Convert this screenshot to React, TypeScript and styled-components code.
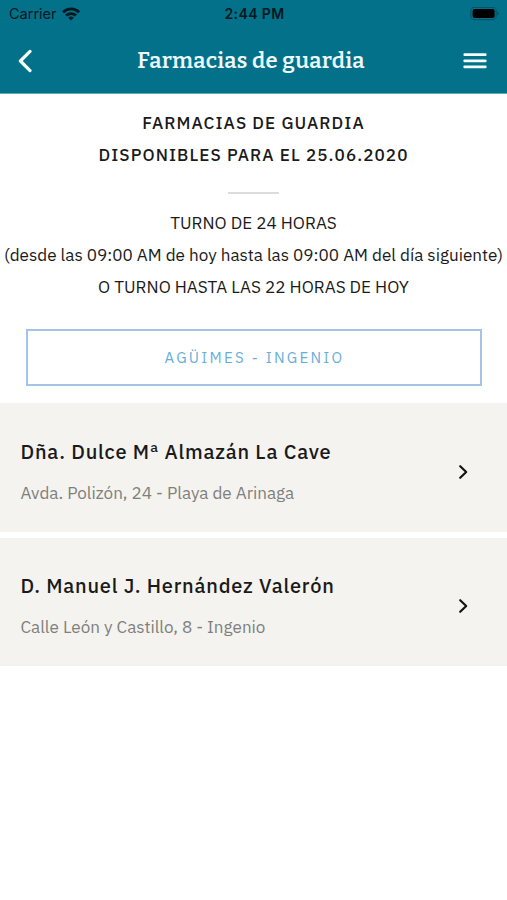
import React from "react";
import styled, { createGlobalStyle } from "styled-components";

const GlobalStyle = createGlobalStyle`
  * { box-sizing: border-box; }
  body {
    margin: 0;
    background: #fff;
    color: #1a1a1a;
    font-family: "IBM Plex Sans", "Noto Sans", sans-serif;
  }
`;

const Screen = styled.div`
  width: 100%;
  min-height: 900px;
  background: #fff;
  overflow: hidden;
`;

const Header = styled.header`
  height: 94px;
  background: #03718a;
  border-bottom: 1px solid #5fa9ba;
`;

const StatusBar = styled.div`
  display: grid;
  grid-template-columns: 1fr auto 1fr;
  align-items: center;
  height: 27px;
  padding: 0 7px 0 9px;
  color: #03181f;
  font-family: Inter, sans-serif;
  line-height: 27px;
`;

const Carrier = styled.div`
  display: flex;
  align-items: center;
  gap: 5px;
  font-size: 14.5px;
`;

const Clock = styled.div`
  font-size: 14px;
  font-weight: 600;
  letter-spacing: 0.4px;
`;

const BatterySlot = styled.div`
  display: flex;
  justify-content: flex-end;
`;

const NavBar = styled.div`
  display: grid;
  grid-template-columns: 57px 1fr 62px;
  align-items: center;
  height: 66px;
`;

const NavButton = styled.button<{ $align: "flex-start" | "flex-end" }>`
  display: flex;
  justify-content: ${(p) => p.$align};
  padding: 0 20px 0 16.5px;
  border: 0;
  background: none;
  color: #f4fcfe;
`;

const Title = styled.h1`
  margin: 0;
  padding-top: 1px;
  color: #eefafd;
  font: 600 22px/66px "Roboto Slab", Bitter, "DejaVu Serif", serif;
  letter-spacing: 0.3px;
  text-align: center;
  white-space: nowrap;
`;

const Intro = styled.section`
  display: flex;
  flex-direction: column;
  align-items: center;
  padding-top: 13px;
`;

const IntroLine = styled.p<{ $strong?: boolean }>`
  margin: 0;
  font-size: 17.1px;
  font-weight: ${(p) => (p.$strong ? 500 : 400)};
  letter-spacing: ${(p) => (p.$strong ? "1.07px" : "0")};
  line-height: 32px;
  white-space: nowrap;
`;

const Divider = styled.hr`
  width: 51px;
  height: 2px;
  margin: 21px 0 13px;
  border: 0;
  background: #dcdcdc;
`;

const ZoneButton = styled.button`
  display: block;
  width: 456px;
  height: 57px;
  margin: 26px 0 17px 26px;
  padding: 0 0 0 1px;
  border: 2px solid #a3c4e6;
  background: #fff;
  color: #67aedb;
  font-family: inherit;
  font-size: 15px;
  letter-spacing: 2.25px;
`;

const List = styled.ul`
  display: flex;
  flex-direction: column;
  gap: 6px;
  margin: 0;
  padding: 0;
  list-style: none;
`;

const Card = styled.li`
  display: flex;
  align-items: center;
  justify-content: space-between;
  height: 128px;
  padding: 8px 38px 0 20.5px;
  background: #f4f3ef;

  &:first-child {
    height: 129px;
  }
`;

const PharmacyName = styled.h2`
  margin: 0;
  font-size: 20px;
  font-weight: 500;
  letter-spacing: 0.78px;
  line-height: 30px;
`;

const Address = styled.p`
  margin: 12px 0 0;
  color: #7f7f7d;
  font-size: 17.1px;
  line-height: 28px;
`;

const WifiIcon = () => (
  <svg width="18" height="14" viewBox="0 0 18 14" fill="none" stroke="#03181f" strokeWidth="2.8">
    <path d="M1 5.2a11.4 11.4 0 0 1 16 0" />
    <path d="M4 8.6a7.1 7.1 0 0 1 10 0" />
    <path d="M9 13.4 6.2 10.8a4 4 0 0 1 5.6 0Z" fill="#03181f" stroke="none" />
  </svg>
);

const BatteryIcon = () => (
  <svg width="30" height="14" viewBox="0 0 30 14">
    <rect x="0.8" y="0.3" width="25.4" height="12.4" rx="3.6" fill="none" stroke="#03566a" strokeWidth="1.2" />
    <rect x="2.6" y="1.9" width="22" height="9.2" rx="2" fill="#000" />
    <path d="M27.4 4.5v4q1.6-.6 1.6-2t-1.6-2Z" fill="#03566a" />
  </svg>
);

const BackIcon = () => (
  <svg width="15" height="24" viewBox="0 0 15 24" fill="none" stroke="currentColor" strokeWidth="3.2">
    <path d="M13 2.4 3.4 12 13 21.6" strokeLinecap="round" strokeLinejoin="round" />
  </svg>
);

const MenuIcon = () => (
  <svg width="24" height="18" viewBox="0 0 24 18" fill="currentColor">
    <rect x="0.5" y="1.3" width="23" height="2.8" rx="0.8" />
    <rect x="0.5" y="7.4" width="23" height="2.8" rx="0.8" />
    <rect x="0.5" y="13.5" width="23" height="2.8" rx="0.8" />
  </svg>
);

const ChevronIcon = () => (
  <svg width="11" height="16" viewBox="0 0 11 16" fill="none" stroke="#141414" strokeWidth="2.2">
    <path d="M2.2 2.2 8.2 8l-6 5.8" strokeLinecap="round" strokeLinejoin="round" />
  </svg>
);

const pharmacies = [
  { name: "Dña. Dulce Mª Almazán La Cave", address: "Avda. Polizón, 24 - Playa de Arinaga" },
  { name: "D. Manuel J. Hernández Valerón", address: "Calle León y Castillo, 8 - Ingenio" },
];

export default function App() {
  return (
    <Screen>
      <GlobalStyle />
      <Header>
        <StatusBar>
          <Carrier>
            Carrier
            <WifiIcon />
          </Carrier>
          <Clock>2:44 PM</Clock>
          <BatterySlot>
            <BatteryIcon />
          </BatterySlot>
        </StatusBar>
        <NavBar>
          <NavButton $align="flex-start" aria-label="Volver">
            <BackIcon />
          </NavButton>
          <Title>Farmacias de guardia</Title>
          <NavButton $align="flex-end" aria-label="Menú">
            <MenuIcon />
          </NavButton>
        </NavBar>
      </Header>
      <Intro>
        <IntroLine $strong>FARMACIAS DE GUARDIA</IntroLine>
        <IntroLine $strong>DISPONIBLES PARA EL 25.06.2020</IntroLine>
        <Divider />
        <IntroLine>TURNO DE 24 HORAS</IntroLine>
        <IntroLine>(desde las 09:00 AM de hoy hasta las 09:00 AM del día siguiente)</IntroLine>
        <IntroLine>O TURNO HASTA LAS 22 HORAS DE HOY</IntroLine>
      </Intro>
      <ZoneButton>AGÜIMES - INGENIO</ZoneButton>
      <List>
        {pharmacies.map((p) => (
          <Card key={p.name}>
            <div>
              <PharmacyName>{p.name}</PharmacyName>
              <Address>{p.address}</Address>
            </div>
            <ChevronIcon />
          </Card>
        ))}
      </List>
    </Screen>
  );
}
